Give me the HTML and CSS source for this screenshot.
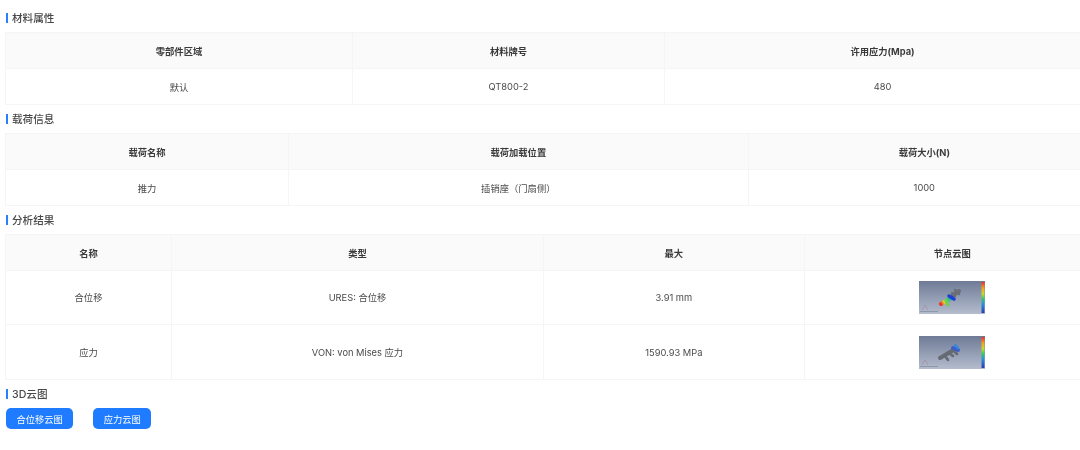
FILE: index.html
```html
<!DOCTYPE html>
<html lang="zh-CN">
<head>
<meta charset="utf-8">
<title>分析报告</title>
<link rel="stylesheet" href="styles.css">
</head>
<body>
<svg class="defs" width="0" height="0" aria-hidden="true">
  <defs>
    <linearGradient id="bg" x1="0" y1="0" x2="0" y2="1">
      <stop offset="0" stop-color="#6f7b96"/>
      <stop offset="1" stop-color="#b4bccd"/>
    </linearGradient>
    <linearGradient id="scale" x1="0" y1="0" x2="0" y2="1">
      <stop offset="0" stop-color="#e8302a"/>
      <stop offset=".2" stop-color="#f2a51f"/>
      <stop offset=".38" stop-color="#c8d92c"/>
      <stop offset=".55" stop-color="#35c46a"/>
      <stop offset=".72" stop-color="#2a8fd8"/>
      <stop offset="1" stop-color="#2a3bb0"/>
    </linearGradient>
    <linearGradient id="rainbow" gradientUnits="userSpaceOnUse" x1="22" y1="23" x2="36" y2="14">
      <stop offset="0" stop-color="#e8302a"/>
      <stop offset=".22" stop-color="#e8d52a"/>
      <stop offset=".45" stop-color="#3fd05a"/>
      <stop offset=".68" stop-color="#20a8d8"/>
      <stop offset=".85" stop-color="#2030c8"/>
      <stop offset="1" stop-color="#2030c8"/>
    </linearGradient>
  </defs>
</svg>

<section class="block">
  <h2 class="title">材料属性</h2>
  <table class="grid t1">
    <colgroup><col class="c1"><col class="c2"><col class="c3"></colgroup>
    <thead><tr><th>零部件区域</th><th>材料牌号</th><th>许用应力(Mpa)</th></tr></thead>
    <tbody><tr><td>默认</td><td>QT800-2</td><td>480</td></tr></tbody>
  </table>
</section>

<section class="block">
  <h2 class="title">载荷信息</h2>
  <table class="grid t2">
    <colgroup><col class="c1"><col class="c2"><col class="c3"></colgroup>
    <thead><tr><th>载荷名称</th><th>载荷加载位置</th><th>载荷大小(N)</th></tr></thead>
    <tbody><tr><td>推力</td><td>插销座（门扇侧）</td><td>1000</td></tr></tbody>
  </table>
</section>

<section class="block">
  <h2 class="title">分析结果</h2>
  <table class="grid t3">
    <colgroup><col class="c1"><col class="c2"><col class="c3"><col class="c4"></colgroup>
    <thead><tr><th>名称</th><th>类型</th><th>最大</th><th>节点云图</th></tr></thead>
    <tbody>
      <tr class="tall">
        <td>合位移</td><td>URES: 合位移</td><td>3.91 mm</td>
        <td>
          <svg class="thumb" viewBox="0 0 66 33" role="img" aria-label="合位移节点云图">
            <rect width="66" height="33" fill="url(#bg)"/>
            <rect x="62.5" y="1" width="3" height="31" fill="url(#scale)"/>
            <path d="M33 15 L40 10" stroke="#6a6f78" stroke-width="4" stroke-linecap="round"/>
            <path d="M36 9 L40 13 M33 12 L36 15" stroke="#6a6f78" stroke-width="2.5" stroke-linecap="round"/>
            <path d="M22 23 L32 17" stroke="url(#rainbow)" stroke-width="4" fill="none" stroke-linecap="round"/>
            <path d="M27 20 L29 24" stroke="#6fd050" stroke-width="3" stroke-linecap="round"/>
            <path d="M30 15 L35 18" stroke="#2040d0" stroke-width="3.5" stroke-linecap="round"/>
            <path d="M3 29 L6 24 L9 29" stroke="#a38aa0" stroke-width=".7" fill="none"/>
            <rect x="1" y="30" width="18" height="1" fill="#8f97a8"/>
          </svg>
        </td>
      </tr>
      <tr class="tall">
        <td>应力</td><td>VON: von Mises 应力</td><td>1590.93 MPa</td>
        <td>
          <svg class="thumb" viewBox="0 0 66 33" role="img" aria-label="应力节点云图">
            <rect width="66" height="33" fill="url(#bg)"/>
            <rect x="62.5" y="1" width="3" height="31" fill="url(#scale)"/>
            <path d="M21 22 L36 13" stroke="#666a72" stroke-width="4" fill="none" stroke-linecap="round"/>
            <path d="M26 20 L29 24 M30 17 L34 20 M34 14 L38 18" stroke="#666a72" stroke-width="2.5" stroke-linecap="round"/>
            <path d="M34 12 L39 14" stroke="#3a60c8" stroke-width="4" stroke-linecap="round"/>
            <path d="M36 9 L39 12" stroke="#3a88d8" stroke-width="2.5" stroke-linecap="round"/>
            <path d="M3 29 L6 24 L9 29" stroke="#a38aa0" stroke-width=".7" fill="none"/>
            <rect x="1" y="30" width="18" height="1" fill="#8f97a8"/>
          </svg>
        </td>
      </tr>
    </tbody>
  </table>
</section>

<section class="block">
  <h2 class="title">3D云图</h2>
  <div class="actions">
    <button class="btn" type="button">合位移云图</button>
    <button class="btn" type="button">应力云图</button>
  </div>
</section>
</body>
</html>
```
FILE: styles.css
```css
* { box-sizing: border-box; }
html, body { margin: 0; height: 100%; overflow: hidden; background: #fff; }
body {
  padding: 10px 0 0 5px;
  width: 1100px;
  font-family: Inter, "Noto Sans CJK SC", sans-serif;
  font-size: 9.3px;
  color: #444;
  filter: blur(0.45px);
}
.defs { position: absolute; }
.block { margin-bottom: 6px; }
.title {
  margin: 0 0 7px 1px;
  padding-left: 6px;
  height: 15px;
  line-height: 17px;
  font-size: 10.6px;
  font-weight: 500;
  color: #484848;
  position: relative;
}
.title::before {
  content: "";
  position: absolute;
  left: 0;
  top: 3px;
  width: 2px;
  height: 10px;
  background: #2a7fff;
}
.grid {
  border-collapse: collapse;
  table-layout: fixed;
  width: 1095px;
}
.grid th, .grid td {
  border: 1px solid #f5f5f5;
  text-align: center;
  padding: 0;
}
.grid th {
  height: 36px;
  background: #fafafa;
  font-weight: 700;
  color: #3a3a3a;
}
.grid td { height: 36px; color: #4a4a4a; }
.grid .tall td { height: 54px; padding-bottom: 1px; }
.grid .tall + .tall td { height: 55px; padding-bottom: 0; }
.t1 .c1 { width: 347px; } .t1 .c2 { width: 312px; } .t1 .c3 { width: 436px; }
.t2 .c1 { width: 283px; } .t2 .c2 { width: 459.6px; } .t2 .c3 { width: 352.4px; }
.t3 .c1 { width: 166px; } .t3 .c2 { width: 372px; } .t3 .c3 { width: 260.6px; } .t3 .c4 { width: 296.4px; }
.t3 .tall td:last-child { text-align: left; padding-left: 114px; }
.thumb { display: block; width: 66px; height: 33px; filter: blur(.4px); }
.actions { display: flex; gap: 20px; margin-left: 1px; }
.btn {
  height: 21px;
  padding: 0 10.4px;
  border: 0;
  border-radius: 5px;
  background: #1f7bff;
  color: #fff;
  font: inherit;
}
```
